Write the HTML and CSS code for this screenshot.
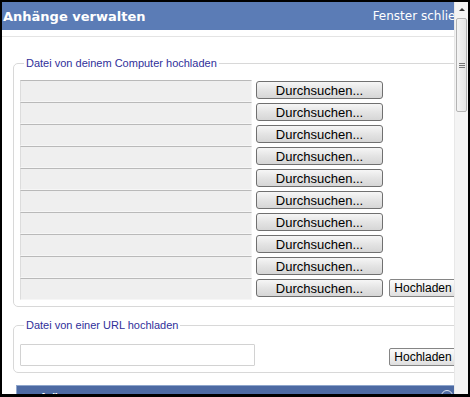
FILE: index.html
```html
<!DOCTYPE html>
<html>
<head>
	<title>Anhänge verwalten</title>
	<meta charset="utf-8">
	<link rel="stylesheet" href="styles.css">
</head>
<body>
<div id="frame">
	<div id="page">
		<!-- Kopfzeile -->
		<div class="header">
			<span class="title">Anhänge verwalten</span>
			<span class="close">Fenster schließen</span>
		</div>
		<div class="toolStrip"></div>

		<!-- Upload vom Computer -->
		<fieldset class="box">
			<legend>Datei von deinem Computer hochladen</legend>
			<div class="fileRow"><span class="fileInput"></span><button class="browse">Durchsuchen...</button></div>
			<div class="fileRow"><span class="fileInput"></span><button class="browse">Durchsuchen...</button></div>
			<div class="fileRow"><span class="fileInput"></span><button class="browse">Durchsuchen...</button></div>
			<div class="fileRow"><span class="fileInput"></span><button class="browse">Durchsuchen...</button></div>
			<div class="fileRow"><span class="fileInput"></span><button class="browse">Durchsuchen...</button></div>
			<div class="fileRow"><span class="fileInput"></span><button class="browse">Durchsuchen...</button></div>
			<div class="fileRow"><span class="fileInput"></span><button class="browse">Durchsuchen...</button></div>
			<div class="fileRow"><span class="fileInput"></span><button class="browse">Durchsuchen...</button></div>
			<div class="fileRow"><span class="fileInput"></span><button class="browse">Durchsuchen...</button></div>
			<div class="fileRow"><span class="fileInput"></span><button class="browse">Durchsuchen...</button><button class="upload">Hochladen</button></div>
		</fieldset>

		<!-- Upload von URL -->
		<fieldset class="box urlBox">
			<legend>Datei von einer URL hochladen</legend>
			<div class="urlRow">
				<input type="text" class="urlInput" />
				<button class="upload">Hochladen</button>
			</div>
		</fieldset>

		<div class="panelBar">
			<span>Anhänge</span>
			<div class="toggle"></div>
		</div>
	</div>

	<!-- Scrollleiste -->
	<div class="scrollbar">
		<div class="arrowUp"></div>
		<div class="thumb"><i></i><i></i><i></i></div>
		<div class="track"></div>
	</div>
</div>
</body>
</html>
```

FILE: styles.css
```css
html,body{
	padding: 0;
	margin: 0;
	height: 100%;
}

body{
	background-color: #000;
	padding: 2px 2px 3px 2px;
	box-sizing: border-box;
	font-family: "Liberation Sans", Arial, sans-serif;
}

#frame{
	width: 466px;
	height: 392px;
	display: flex;
	overflow: hidden;
	background-color: #fff;
}

#page{
	flex: 1;
	overflow: hidden;
	min-width: 0;
}

.header{
	height: 28px;
	background-color: #5b7cb6;
	color: #fff;
	display: flex;
	align-items: center;
	justify-content: space-between;
	padding-left: 1px;
	white-space: nowrap;
}
.header .title{
	font-family: "DejaVu Sans", sans-serif;
	font-weight: bold;
	font-size: 13px;
}
.header .close{
	font-family: "DejaVu Sans", sans-serif;
	font-size: 12px;
	margin-right: -24px;
}

.toolStrip{
	height: 6px;
	border-bottom: 1px solid #e4e4e4;
}

.box{
	margin: 20px -12px 0 11px;
	padding: 11px 0 6px 6px;
	border: 1px solid #d8d8d8;
	border-radius: 5px;
	min-width: 0;
}
.box legend{
	font-size: 11px;
	color: #30309a;
	margin-left: 4px;
	padding: 0 2px;
}

.fileRow{
	display: flex;
	align-items: flex-start;
	height: 22px;
	white-space: nowrap;
}
.fileInput{
	display: block;
	width: 230px;
	height: 20px;
	flex: none;
	background-color: #efefef;
	border: 1px solid;
	border-color: #b9b9b9 #f6f6f6 #f6f6f6 #dcdcdc;
}

button{
	font-family: "Liberation Sans", Arial, sans-serif;
	color: #000;
	padding: 0;
	flex: none;
}
.browse{
	margin: 1px 0 0 4px;
	width: 127px;
	height: 18px;
	font-size: 13px;
	line-height: 15px;
	border: 1px solid #707070;
	border-radius: 3px;
	background: linear-gradient(#f6f6f6, #e4e4e4 50%, #d6d6d6);
}
.upload{
	margin: 1px 0 0 6px;
	width: 68px;
	height: 18px;
	font-size: 12px;
	line-height: 15px;
	border: 1px solid #858585;
	border-radius: 2px;
	background: linear-gradient(#fbfbfb, #ececec 60%, #dedede);
}

.urlBox{
	margin-top: 12px;
	padding: 13px 0 6px 6px;
}
.urlRow{
	display: flex;
	align-items: flex-end;
}
.urlInput{
	width: 233px;
	height: 20px;
	margin: 0;
	padding: 0;
	border: 1px solid #d2d2d2;
	border-radius: 1px;
	background-color: #fff;
}
.urlRow .upload{
	margin-left: 134px;
}

.panelBar{
	margin: 12px -10px 0 14px;
	height: 20px;
	background-color: #4d6aa3;
	border: 1px solid #8fa6cc;
	color: #fff;
	font-family: "DejaVu Sans", sans-serif;
	font-weight: bold;
	font-size: 13px;
	line-height: 16px;
	padding: 5px 0 0 5px;
	position: relative;
}
.panelBar .toggle{
	position: absolute;
	top: 4px;
	right: 10px;
	width: 10px;
	height: 10px;
	border: 1px solid #dfe6f2;
	border-radius: 50%;
}

.scrollbar{
	width: 13px;
	flex: none;
	background-color: #f3f3f3;
	display: flex;
	flex-direction: column;
	border-left: 1px solid #e8e8e8;
}
.arrowUp{
	height: 16px;
	position: relative;
}
.arrowUp:after{
	content: "";
	position: absolute;
	left: 4px;
	top: 6px;
	border-left: 3px solid transparent;
	border-right: 3px solid transparent;
	border-bottom: 3px solid #333;
}
.thumb{
	height: 92px;
	margin: 0 1px;
	border: 1px solid #b4b4b4;
	border-radius: 2px;
	background: linear-gradient(90deg, #f4f4f4, #e6e6e6);
	display: flex;
	flex-direction: column;
	justify-content: center;
	align-items: center;
	gap: 1px;
}
.thumb i{
	display: block;
	width: 6px;
	height: 1px;
	background-color: #777;
}
.track{
	flex: 1;
	background-color: #f4f4f4;
}
```
